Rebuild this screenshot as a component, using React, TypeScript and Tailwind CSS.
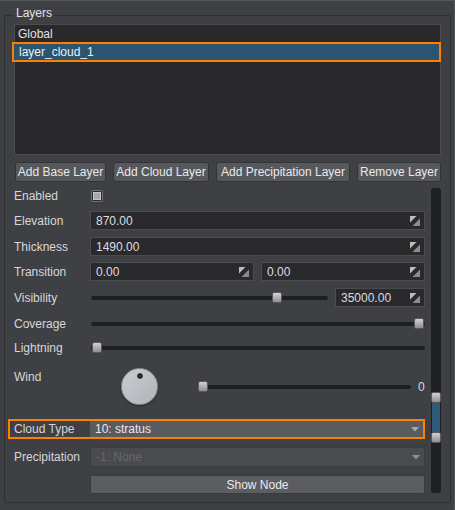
import React from "react";

const SpinIcon = () => (
  <svg width="10" height="10" viewBox="0 0 10 10" className="shrink-0">
    <polygon points="0,0 6.5,0 0,6.5" fill="#bdbdbd" />
    <polygon points="10,2.5 10,10 2.5,10" fill="#8c8c8c" />
  </svg>
);

const Arrow = ({ color }: { color: string }) => (
  <svg width="8" height="5" viewBox="0 0 8 5" className="shrink-0">
    <polygon points="0,0 8,0 4,4.5" fill={color} />
  </svg>
);

function Field({ value, className = "" }: { value: string; className?: string }) {
  return (
    <div
      className={
        "flex h-[19px] items-center justify-between border border-[#4b4c50] bg-[#2a2a2d] pl-[5px] pr-[4px] text-[#dcdde0] " +
        className
      }
    >
      <span>{value}</span>
      <SpinIcon />
    </div>
  );
}

const Handle = ({ className = "" }: { className?: string }) => (
  <div
    className={
      "absolute top-0 h-[11px] w-[10px] rounded-[2px] border border-[#5a5a5a] bg-gradient-to-b from-[#d2d2d2] to-[#8f8f8f] " +
      className
    }
  />
);

const Label = ({ children }: { children: React.ReactNode }) => (
  <div className="w-[76px] shrink-0 text-[#d6d7da]">{children}</div>
);

export default function App() {
  return (
    <div className="h-[510px] w-[455px] border-r border-t border-[#55565a] bg-[#3f4044] pl-[4px] pt-[14px] font-['Liberation_Sans',Arial,sans-serif] text-[12px] leading-[16px] text-[#d6d7da]">
      <div className="relative h-[488px] w-[447px] rounded-[2px] border border-[#2f3034] px-[9px] pt-[8px]">
        <div className="absolute -top-[11px] left-[9px] bg-[#3f4044] px-[2px] text-[#e2e3e6]">
          Layers
        </div>

        {/* list */}
        <div className="h-[131px] border border-[#4a4b4f] bg-[#29292b]">
          <div className="flex h-[17px] items-center pl-[3px] text-[#e0e1e4]">Global</div>
          <div className="-ml-[3px] -mr-[1px] flex h-[20px] items-center border-2 border-[#ff8000] bg-[#2b5470] pl-[5px] text-[#eef0f3]">
            layer_cloud_1
          </div>
        </div>

        {/* buttons */}
        <div className="mt-[7px] flex gap-[7px] pl-[1px]">
          {[
            ["Add Base Layer", "w-[91px]"],
            ["Add Cloud Layer", "w-[96px]"],
            ["Add Precipitation Layer", "w-[134px]"],
            ["Remove Layer", "w-[84px]"],
          ].map(([t, w]) => (
            <div
              key={t}
              className={
                "flex h-[20px] items-center justify-center whitespace-nowrap rounded-[3px] border border-[#333438] bg-[#57585c] text-[#e8e9ec] " +
                w
              }
            >
              {t}
            </div>
          ))}
        </div>

        {/* form + vertical slider */}
        <div className="mt-[6px] flex gap-[6px]">
          <div className="flex w-[411px] flex-col">
            {/* Enabled */}
            <div className="flex h-[16px] items-center">
              <Label>Enabled</Label>
              <div className="ml-[1px] flex h-[12px] w-[12px] items-center justify-center rounded-[2px] border border-[#707175] bg-[#2c2d30]">
                <div className="h-[8px] w-[8px] border border-[#c6c6c8] bg-[#a6a7aa]" />
              </div>
            </div>

            <div className="mt-[7px] flex h-[19px] items-center">
              <Label>Elevation</Label>
              <Field value="870.00" className="flex-1" />
            </div>

            <div className="mt-[7px] flex h-[19px] items-center">
              <Label>Thickness</Label>
              <Field value="1490.00" className="flex-1" />
            </div>

            <div className="mt-[6px] flex h-[19px] items-center">
              <Label>Transition</Label>
              <div className="flex flex-1 gap-[7px]">
                <Field value="0.00" className="flex-1" />
                <Field value="0.00" className="flex-1" />
              </div>
            </div>

            <div className="mt-[7px] flex h-[19px] items-center">
              <Label>Visibility</Label>
              <div className="flex flex-1 items-center gap-[7px]">
                <div className="relative ml-[1px] h-[11px] flex-1">
                  <div className="mt-[4px] h-[4px] rounded-full bg-[#1e1f21]" />
                  <Handle className="left-[181px]" />
                </div>
                <Field value="35000.00" className="w-[90px]" />
              </div>
            </div>

            <div className="mt-[11px] flex h-[11px] items-center">
              <Label>Coverage</Label>
              <div className="relative ml-[1px] h-[11px] flex-1">
                <div className="mt-[4px] h-[4px] rounded-full bg-[#1e1f21]" />
                <Handle className="right-[1px]" />
              </div>
            </div>

            <div className="mt-[13px] flex h-[11px] items-center">
              <Label>Lightning</Label>
              <div className="relative ml-[1px] h-[11px] flex-1">
                <div className="mt-[4px] h-[4px] rounded-full bg-[#1e1f21]" />
                <Handle className="left-[1px]" />
              </div>
            </div>

            <div className="mt-[15px] flex h-[37px] items-start">
              <div className="mt-[1px]">
                <Label>Wind</Label>
              </div>
              <div className="flex h-[37px] flex-1 items-center">
                <div className="relative ml-[31px] h-[37px] w-[37px] shrink-0 rounded-full border border-[#8d8f94] bg-gradient-to-br from-[#c9ccd1] to-[#b1b3b8] shadow-[0_1px_2px_rgba(0,0,0,0.45)]">
                  <div className="absolute left-1/2 top-[3px] h-[8px] w-[8px] -translate-x-1/2 rounded-full border border-[#dcdde0] bg-[#2b2b2d]" />
                </div>
                <div className="relative ml-[40px] h-[11px] flex-1">
                  <div className="mt-[4px] h-[4px] rounded-full bg-[#1e1f21]" />
                  <Handle className="left-0" />
                </div>
                <div className="ml-[7px] mr-[1px] w-[6px] text-right text-[#d8dade]">0</div>
              </div>
            </div>

            <div className="-ml-[6px] mt-[14px] flex h-[20px] items-stretch border-2 border-[#ff8000]">
              <div className="flex w-[80px] shrink-0 items-center pl-[4px] text-[#d6d7da]">Cloud Type</div>
              <div className="flex flex-1 items-center justify-between bg-[#5a5b5f] pl-[5px] pr-[4px] text-[#e6e7ea]">
                <span>10: stratus</span>
                <Arrow color="#a8a9ac" />
              </div>
            </div>

            <div className="mt-[8px] flex h-[20px] items-center">
              <Label>Precipitation</Label>
              <div className="flex h-[20px] flex-1 items-center justify-between rounded-[2px] border border-[#3b3c3f] bg-[#4a4b4e] pl-[5px] pr-[4px] text-[#66676b]">
                <span>-1: None</span>
                <Arrow color="#8e8f92" />
              </div>
            </div>

            <div className="mt-[8px] flex h-[19px] items-center">
              <div className="w-[76px] shrink-0" />
              <div className="flex h-[19px] flex-1 items-center justify-center rounded-[2px] border border-[#3a3b3e] bg-[#5c5d61] text-[#e8e9ec]">
                Show Node
              </div>
            </div>
          </div>

          {/* vertical range slider */}
          <div className="relative h-[305px] w-[10px] rounded-[3px] bg-[#1f2022]">
            <div className="absolute left-[1px] right-[1px] top-[215px] h-[29px] bg-[#2c5a78]" />
            <div className="absolute left-0 top-[204px] h-[11px] w-[10px] rounded-[2px] border border-[#5a5a5a] bg-gradient-to-b from-[#d2d2d2] to-[#8f8f8f]" />
            <div className="absolute left-0 top-[244px] h-[11px] w-[10px] rounded-[2px] border border-[#5a5a5a] bg-gradient-to-b from-[#d2d2d2] to-[#8f8f8f]" />
          </div>
        </div>
      </div>
    </div>
  );
}
